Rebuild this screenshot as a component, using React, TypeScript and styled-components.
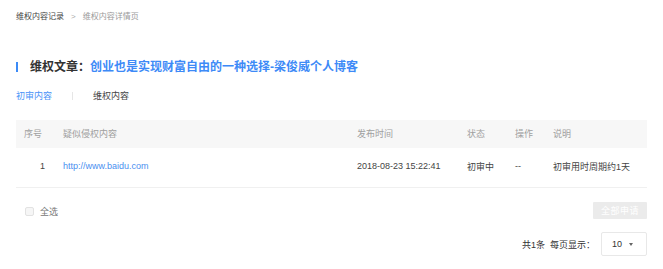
import React from "react";
import styled, { createGlobalStyle } from "styled-components";

const Global = createGlobalStyle`
  html, body { margin: 0; padding: 0; background: #fff; }
  body {
    font-family: "Liberation Sans", "Noto Sans CJK SC", sans-serif;
    color: #333;
  }
  * { box-sizing: border-box; }
`;

const Page = styled.div`
  width: 663px;
  padding: 0 16px;
`;

const Breadcrumb = styled.div`
  display: flex;
  align-items: center;
  height: 12px;
  margin-top: 11px;
  font-size: 8px;
  line-height: 12px;
`;

const Crumb = styled.span<{ $current?: boolean }>`
  color: ${(p) => (p.$current ? "#9a9a9a" : "#444")};
`;

const CrumbSep = styled.span`
  color: #aaa;
  margin: 0 7px 0 7px;
  font-size: 8px;
`;

const TitleRow = styled.div`
  display: flex;
  align-items: center;
  margin-top: 36px;
  height: 16px;
`;

const TitleBar = styled.span`
  width: 2px;
  height: 10px;
  background: #3c8bf7;
  margin-right: 12px;
`;

const TitleLabel = styled.span`
  font-size: 12px;
  font-weight: bold;
  color: #333;
  line-height: 16px;
`;

const TitleLink = styled.span`
  font-size: 12px;
  font-weight: bold;
  color: #3d8af7;
  line-height: 16px;
`;

const Tabs = styled.div`
  display: flex;
  align-items: center;
  margin-top: 15px;
  height: 12px;
  font-size: 9px;
  line-height: 12px;
`;

const Tab = styled.span<{ $active?: boolean }>`
  color: ${(p) => (p.$active ? "#4a92f7" : "#444")};
`;

const TabSep = styled.span`
  width: 1px;
  height: 8px;
  background: #e6e6e6;
  margin: 0 20px;
`;

const Table = styled.div`
  margin-top: 18px;
  width: 631px;
`;

const Row = styled.div<{ $head?: boolean }>`
  display: grid;
  grid-template-columns: 47px 294px 110px 48px 38px 94px;
  align-items: center;
  height: ${(p) => (p.$head ? "28px" : "40px")};
  background: ${(p) => (p.$head ? "#f7f7f7" : "#fff")};
  border-bottom: 1px solid ${(p) => (p.$head ? "#f7f7f7" : "#f0f0f0")};
  font-size: 9px;
  color: ${(p) => (p.$head ? "#a0a0a0" : "#444")};
  padding-bottom: ${(p) => (p.$head ? "0" : "3px")};
`;

const Cell = styled.div<{ $pad?: number }>`
  padding-left: ${(p) => p.$pad ?? 0}px;
  white-space: nowrap;
`;

const Link = styled.span`
  color: #4a8ff0;
`;

const ActionRow = styled.div`
  display: flex;
  align-items: center;
  justify-content: space-between;
  width: 631px;
  margin-top: 14px;
  padding-left: 9px;
`;

const CheckLabel = styled.label`
  display: flex;
  align-items: center;
  font-size: 9px;
  color: #777;
  margin-top: 2px;
`;

const Checkbox = styled.span`
  width: 9px;
  height: 9px;
  border: 1px solid #e2e2e2;
  border-radius: 2px;
  background: #f6f6f6;
  margin-right: 6px;
`;

const DisabledButton = styled.button`
  width: 54px;
  height: 17px;
  border: none;
  border-radius: 1px;
  background: #ebebeb;
  color: #fff;
  font-size: 9px;
  font-family: inherit;
  padding: 0;
  letter-spacing: 0.5px;
`;

const Pager = styled.div`
  display: flex;
  align-items: center;
  justify-content: flex-end;
  width: 631px;
  margin-top: 13px;
  font-size: 9px;
  color: #333;
`;

const PagerText = styled.span`
  margin-right: 6px;
`;

const Select = styled.div`
  width: 46px;
  height: 24px;
  border: 1px solid #e8e8e8;
  border-radius: 2px;
  display: flex;
  align-items: center;
  padding-left: 10px;
  font-size: 9px;
  color: #333;
`;

const Caret = styled.span`
  margin-left: 7px;
  width: 0;
  height: 0;
  border-left: 2.5px solid transparent;
  border-right: 2.5px solid transparent;
  border-top: 3px solid #666;
`;

export default function App() {
  return (
    <Page>
      <Global />
      <Breadcrumb>
        <Crumb>维权内容记录</Crumb>
        <CrumbSep>&gt;</CrumbSep>
        <Crumb $current>维权内容详情页</Crumb>
      </Breadcrumb>
      <TitleRow>
        <TitleBar />
        <TitleLabel>维权文章：</TitleLabel>
        <TitleLink>创业也是实现财富自由的一种选择-梁俊威个人博客</TitleLink>
      </TitleRow>
      <Tabs>
        <Tab $active>初审内容</Tab>
        <TabSep />
        <Tab>维权内容</Tab>
      </Tabs>
      <Table>
        <Row $head>
          <Cell $pad={8}>序号</Cell>
          <Cell>疑似侵权内容</Cell>
          <Cell>发布时间</Cell>
          <Cell>状态</Cell>
          <Cell>操作</Cell>
          <Cell>说明</Cell>
        </Row>
        <Row>
          <Cell $pad={24}>1</Cell>
          <Cell>
            <Link>http://www.baidu.com</Link>
          </Cell>
          <Cell>2018-08-23 15:22:41</Cell>
          <Cell>初审中</Cell>
          <Cell>--</Cell>
          <Cell>初审用时周期约1天</Cell>
        </Row>
      </Table>
      <ActionRow>
        <CheckLabel>
          <Checkbox />
          全选
        </CheckLabel>
        <DisabledButton disabled>全部申请</DisabledButton>
      </ActionRow>
      <Pager>
        <PagerText>共1条&nbsp;&nbsp;每页显示：</PagerText>
        <Select>
          10
          <Caret />
        </Select>
      </Pager>
    </Page>
  );
}
